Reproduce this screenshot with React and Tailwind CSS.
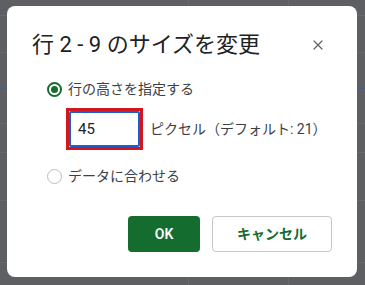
import { X } from "lucide-react";

export default function App() {
  return (
    <div
      className="relative w-[365px] h-[285px] overflow-hidden bg-[#5d5f62]"
      style={{ fontFamily: '"Roboto", "Noto Sans CJK JP", sans-serif' }}
    >
      {/* spreadsheet grid behind the overlay */}
      <div className="absolute inset-0 pointer-events-none">
        <div className="absolute left-0 right-0 top-[15px] h-px bg-[#67696c]" />
        <div className="absolute left-0 right-0 top-[52px] h-px bg-[#67696c]" />
        <div className="absolute left-0 right-0 top-[88px] h-px bg-[#4a5a8a]" />
        <div className="absolute left-0 right-0 top-[123px] h-px bg-[#67696c]" />
        <div className="absolute left-0 right-0 top-[152px] h-px bg-[#67696c]" />
        <div className="absolute left-0 right-0 top-[200px] h-px bg-[#67696c]" />
        <div className="absolute left-0 right-0 top-[262px] h-px bg-[#67696c]" />
        <div className="absolute top-0 bottom-0 left-[188px] w-px bg-[#67696c]" />
        <div className="absolute top-0 bottom-0 left-[288px] w-px bg-[#67696c]" />
      </div>

      <div className="absolute left-[7px] top-[6px] w-[350px] h-[271px] bg-white rounded-[8px] flex flex-col">
        <div className="flex items-center justify-between pl-[25px] pr-[31px] pt-[23px]">
          <h1 className="text-[22px] leading-[32px] text-[#202124]">
            行 2 - 9 のサイズを変更
          </h1>
          <X size={16} strokeWidth={1.8} className="text-[#5f6368]" />
        </div>

        <div className="flex flex-col pl-[40px] mt-[18px]">
          <label className="flex items-center gap-[6px] h-[20px]">
            <span className="w-[15px] h-[15px] rounded-full border-2 border-[#146c2e] flex items-center justify-center">
              <span className="w-[7px] h-[7px] rounded-full bg-[#146c2e]" />
            </span>
            <span className="text-[14px] text-[#3c4043]">行の高さを指定する</span>
          </label>

          <div className="flex items-center gap-[7px] ml-[19px] mt-[9px]">
            <div className="w-[77px] h-[42px] border-[3px] border-[#d3161b]">
              <div className="w-full h-full border-2 border-[#1a5fd0] rounded-[2px] flex items-center pl-[7px] text-[15px] text-[#202124]">
                45
              </div>
            </div>
            <span className="text-[14px] text-[#3c4043]">ピクセル（デフォルト: 21）</span>
          </div>

          <label className="flex items-center gap-[6px] h-[20px] mt-[16px]">
            <span className="w-[15px] h-[15px] rounded-full border border-[#bdbdbd]" />
            <span className="text-[14px] text-[#3c4043]">データに合わせる</span>
          </label>
        </div>

        <div className="flex justify-end gap-[12px] pr-[25px] mt-[30px]">
          <button className="w-[72px] h-[36px] rounded-[4px] bg-[#146c2e] text-white text-[14px] font-semibold">
            OK
          </button>
          <button className="w-[120px] h-[36px] rounded-[4px] border border-[#c6c6c6] text-[#146c2e] text-[14px] font-semibold">
            キャンセル
          </button>
        </div>
      </div>
    </div>
  );
}
